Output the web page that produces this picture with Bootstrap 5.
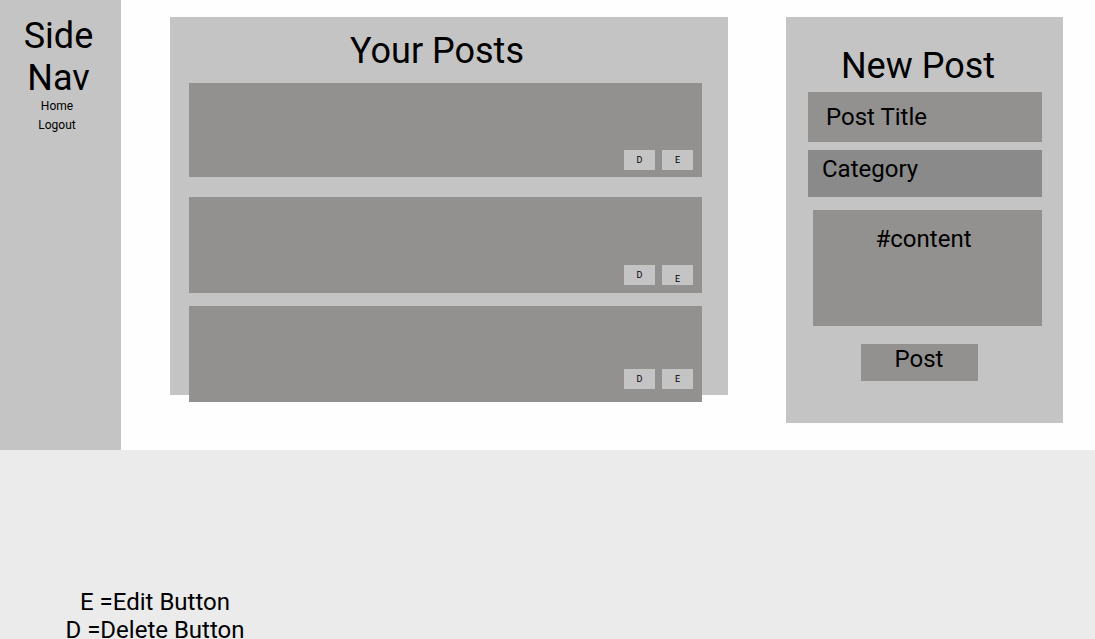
<!DOCTYPE html>
<html lang="en">
<head>
<meta charset="utf-8">
<meta name="viewport" content="width=device-width, initial-scale=1">
<title>Your Posts</title>
<link href="https://cdn.jsdelivr.net/npm/bootstrap@5.3.0/dist/css/bootstrap.min.css" rel="stylesheet">
<style>
  body { font-family: Roboto, "Liberation Sans", sans-serif; font-size: 24px; line-height: 28px; color: #000; background: #ebebeb; }
  .board { background: #fefefe; }
  .panel { background: #c4c4c4; }
  .title { font-size: 36px; line-height: 42px; font-weight: 400; }
  .side { width: 121px; padding: 15px 4px 0 0; }
  .side .nav-link { font-size: 12px; line-height: 19px; padding: 0; color: #000; }
  .side .nav { padding-right: 3px; margin-top: -2px; }
  .workspace { padding: 17px 32px 27px 49px; column-gap: 58px; row-gap: 24px; }
  .posts { padding: 13px 26px 0 19px; }
  .posts .title { margin-bottom: 11px; padding-right: 17px; }
  /* the last post hangs over the lower edge of the panel */
  .post-list { margin-bottom: -7px; }
  .post { background: #92918f; min-height: 96px; padding: 0 9px 8px; gap: 7px; margin-bottom: 13px; }
  .post:first-child { min-height: 94px; margin-bottom: 20px; padding-bottom: 7px; }
  .post:last-child { margin-bottom: 0; padding-bottom: 13px; }
  .post .btn { width: 31px; height: 20px; padding: 0; font-size: 9px; line-height: 20px; }
  .post .btn.low { padding-top: 8px; line-height: 12px; }
  .btn.panel, .btn.panel:hover { background: #c4c4c4; color: #000; }
  .btn { border: 0; border-radius: 0; }
  .composer { width: 277px; padding: 28px 21px 42px 22px; }
  .composer .title { margin-bottom: 5px; padding-right: 14px; }
  .composer .form-control, .composer .form-select { border: 0; border-radius: 0; background: #92918f; color: #000; font-size: 24px; line-height: 28px; }
  .composer ::placeholder { color: #000; opacity: 1; }
  #post-title { height: 50px; padding: 0 18px; margin-bottom: 8px; }
  .composer #category { height: 47px; padding: 0 14px 10px; margin-bottom: 13px; background: #8a8a8a; }
  .content-row { padding-left: 5px; }
  #content { height: 116px; padding: 15px 8px 0 0; resize: none; }
  .submit-row { padding: 18px 12px 0 0; }
  .submit-row .btn { width: 117px; height: 37px; padding: 0 0 7px; font-size: 24px; line-height: 28px; color: #000; background: #92918f; }
  .legend { width: 310px; padding-top: 138px; }
  .legend ul { margin-bottom: -5px; }
</style>
</head>
<body>
<div class="board d-flex">
  <aside class="side panel flex-shrink-0 text-center">
    <h1 class="title m-0">Side Nav</h1>
    <nav class="nav flex-column" aria-label="Side navigation">
      <a class="nav-link" href="#">Home</a>
      <a class="nav-link" href="#">Logout</a>
    </nav>
  </aside>
  <main class="workspace d-flex flex-column flex-lg-row align-items-start flex-grow-1">
    <section class="posts panel flex-grow-1 align-self-stretch align-self-lg-start d-flex flex-column">
      <h2 class="title mt-0 text-center">Your Posts</h2>
      <div class="post-list">
        <article class="post d-flex justify-content-end align-items-end">
          <button type="button" class="btn panel" title="Delete">D</button>
          <button type="button" class="btn panel" title="Edit">E</button>
        </article>
        <article class="post d-flex justify-content-end align-items-end">
          <button type="button" class="btn panel" title="Delete">D</button>
          <button type="button" class="btn panel low" title="Edit">E</button>
        </article>
        <article class="post d-flex justify-content-end align-items-end">
          <button type="button" class="btn panel" title="Delete">D</button>
          <button type="button" class="btn panel" title="Edit">E</button>
        </article>
      </div>
    </section>
    <form class="composer panel flex-shrink-0">
      <h2 class="title mt-0 text-center">New Post</h2>
      <input class="form-control" id="post-title" type="text" placeholder="Post Title" aria-label="Post Title">
      <select class="form-select" id="category" aria-label="Category"><option>Category</option></select>
      <div class="content-row">
        <textarea class="form-control text-center" id="content" placeholder="#content" aria-label="Content"></textarea>
      </div>
      <div class="submit-row d-flex justify-content-center">
        <button type="submit" class="btn">Post</button>
      </div>
    </form>
  </main>
</div>
<footer class="legend overflow-hidden text-center">
  <ul class="list-unstyled">
    <li>E =Edit Button</li>
    <li>D =Delete Button</li>
  </ul>
</footer>
<script src="https://cdn.jsdelivr.net/npm/bootstrap@5.3.0/dist/js/bootstrap.bundle.min.js"></script>
</body>
</html>
